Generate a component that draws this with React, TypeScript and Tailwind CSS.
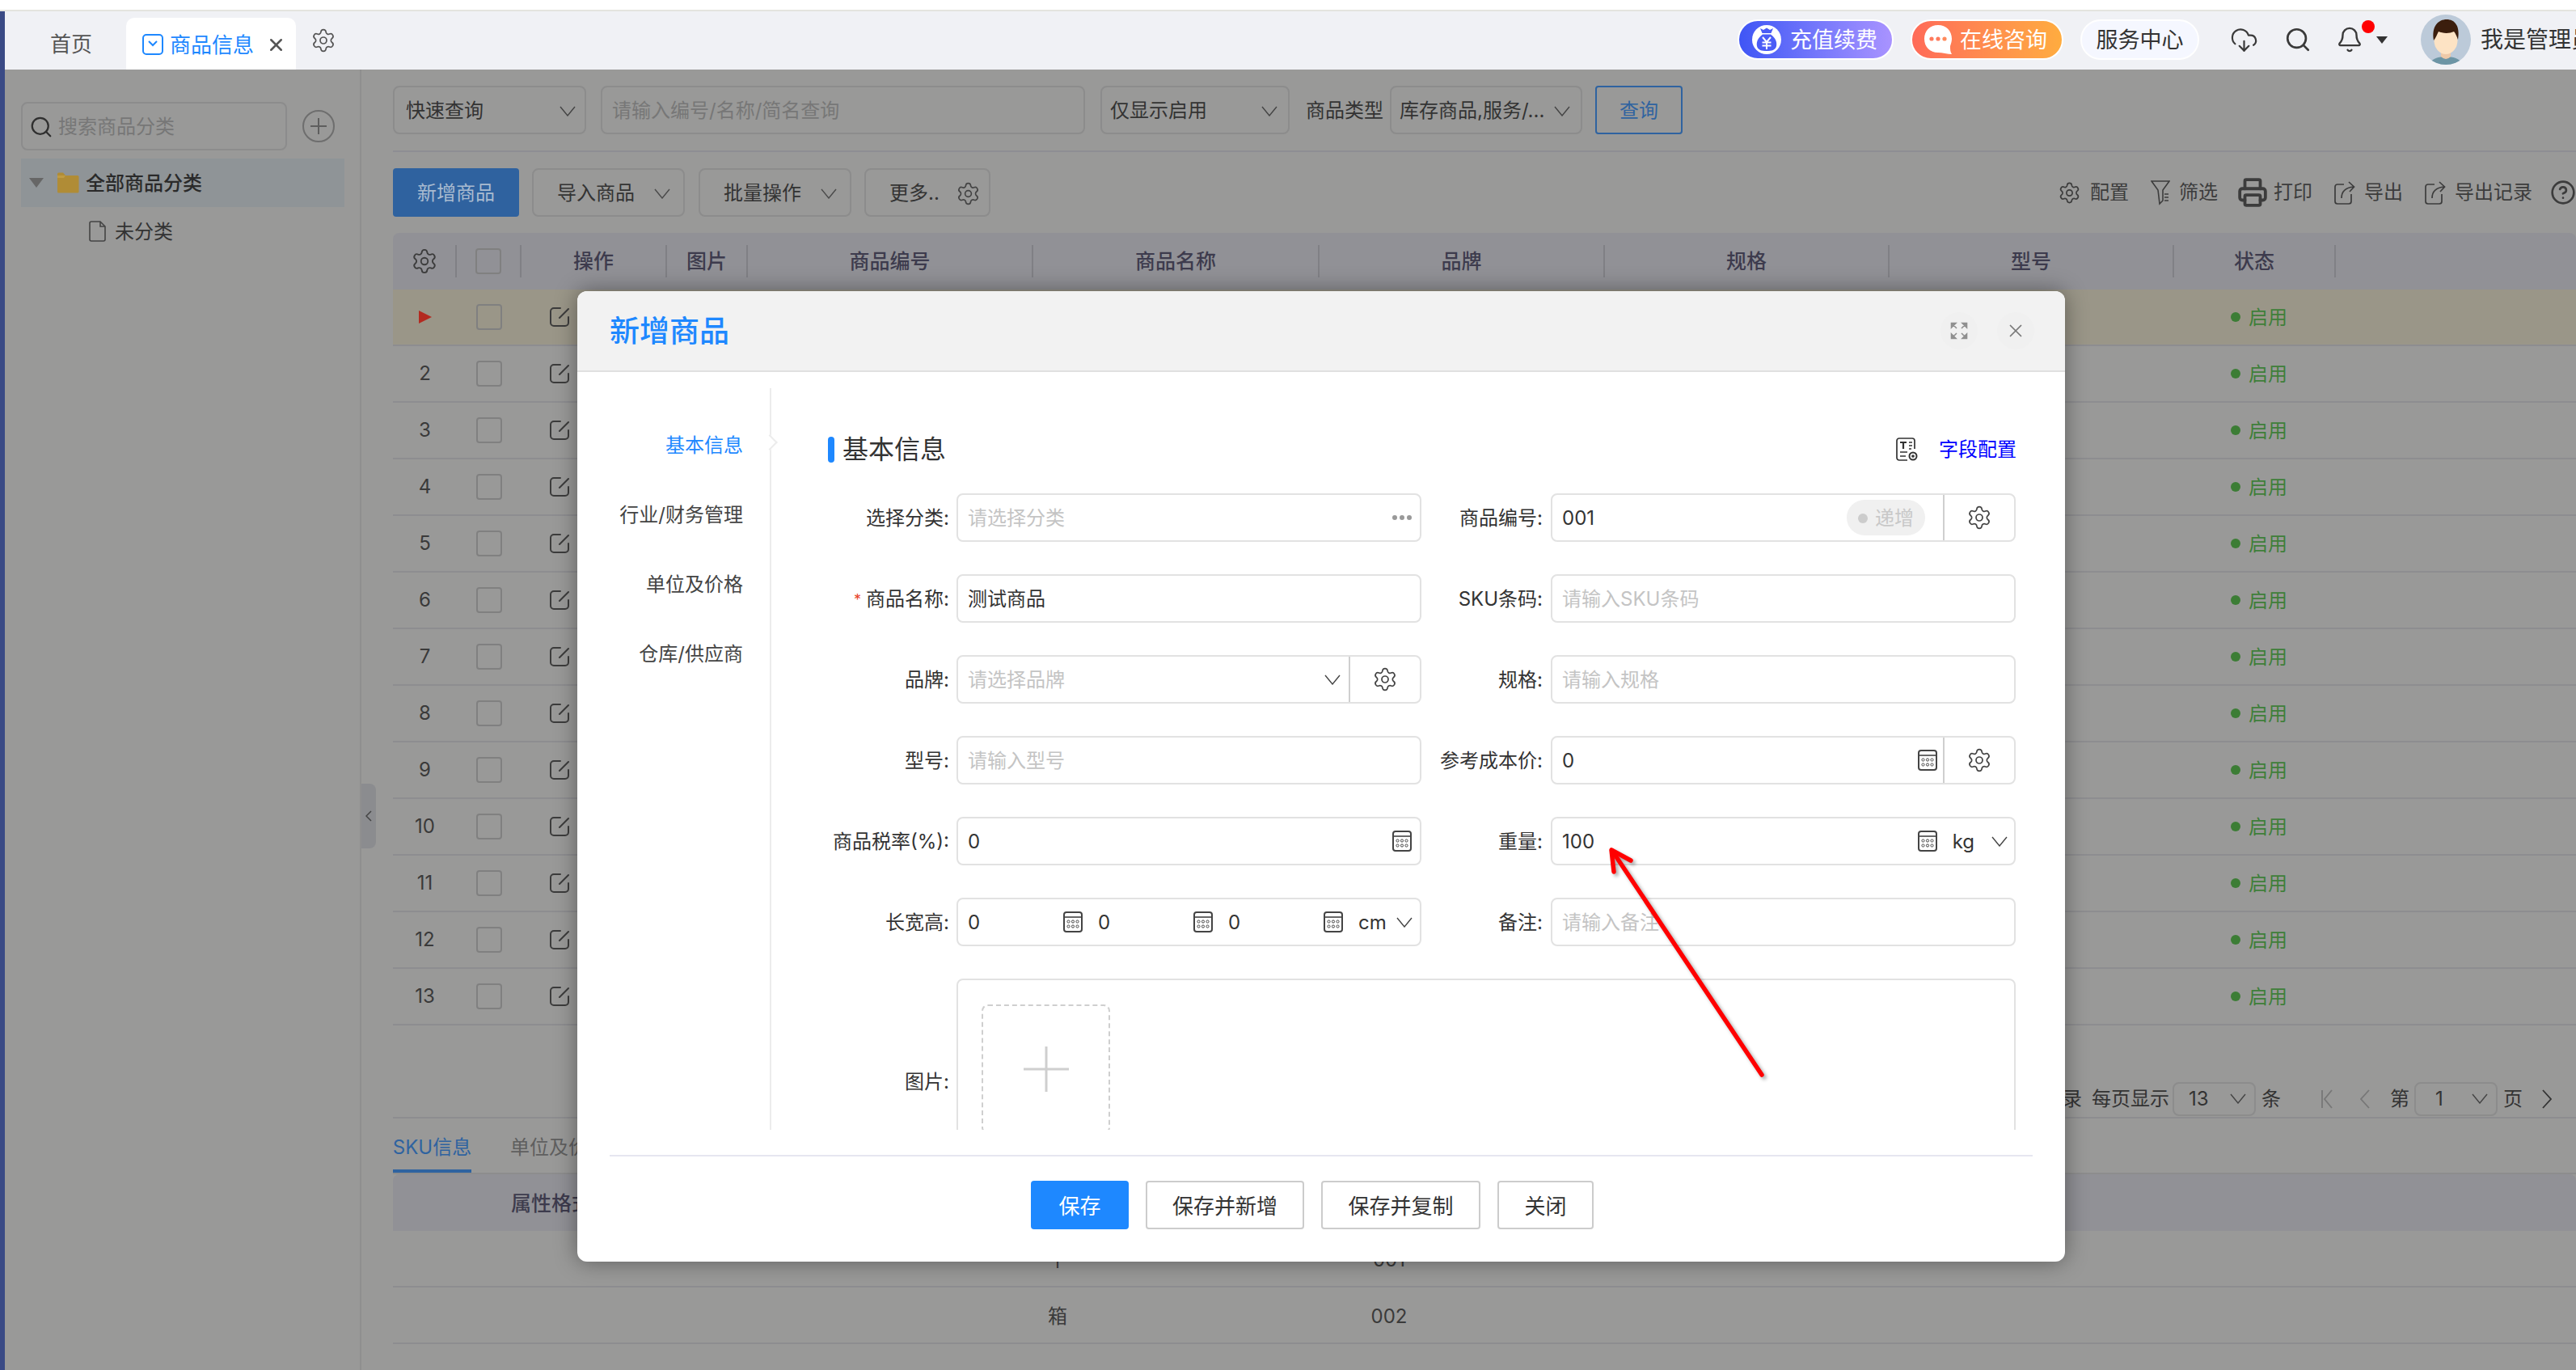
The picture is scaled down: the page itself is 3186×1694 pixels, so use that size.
import { Bell, CircleHelp, CloudDownload, Printer, Search, Settings, X } from "lucide-react";
import type { ReactNode } from "react";

const COLS = "grid grid-cols-[79px_80px_180px_100px_353px_354px_353px_352px_352px_200px_1fr]";

function Chev({ className = "text-[#444]", w = 20 }: { className?: string; w?: number }) {
  return (
    <svg width={w} height={13} viewBox="0 0 20 13" fill="none" stroke="currentColor" strokeWidth="1.4" className={`shrink-0 ${className}`}>
      <path d="M1 1 L10 12 L19 1" />
    </svg>
  );
}

function Calc() {
  return (
    <svg width="24" height="26" viewBox="0 0 24 26" fill="none" stroke="#444" className="shrink-0">
      <rect x="1" y="1" width="22" height="24" rx="3" strokeWidth="2" />
      <path d="M1 7h22" strokeWidth="1.6" />
      {[6.5, 12, 17.5].map((x) =>
        [12.5, 18.5].map((y) => <circle key={`${x}-${y}`} cx={x} cy={y} r="1.6" strokeWidth="1" />),
      )}
    </svg>
  );
}

function EditIcon() {
  return (
    <svg width="24" height="26" viewBox="0 0 24 26" fill="none" stroke="#3c3c3c" strokeWidth="2" strokeLinecap="round" className="shrink-0">
      <path d="M13 2 H5 a4 4 0 0 0 -4 4 V20 a4 4 0 0 0 4 4 H19 a4 4 0 0 0 4 -4 V13" />
      <path d="M12 14 L23 3" />
    </svg>
  );
}

function ExportIcon() {
  return (
    <svg width="26" height="30" viewBox="0 0 26 30" fill="none" stroke="#3c3c3c" strokeWidth="1.7" className="shrink-0">
      <path d="M12 5 H4 a3 3 0 0 0 -3 3 V26 a3 3 0 0 0 3 3 H18 a3 3 0 0 0 3 -3 V17" />
      <path d="M9 22 C9 14 13 9 24 8 M18 2 L24.5 8 L19 14" />
    </svg>
  );
}

function FilterIcon() {
  return (
    <svg width="24" height="32" viewBox="0 0 24 32" fill="none" stroke="#3c3c3c" strokeWidth="1.6" className="shrink-0">
      <path d="M1 2 H23 L15 13 V26 L11 30 Q10 21 9 13 Z" />
      <path d="M17 18 h5 M17 22 h5 M17 26 h5" />
    </svg>
  );
}

function FullIcon() {
  return (
    <svg width="22" height="22" viewBox="0 0 22 22" fill="#8f8f8f" stroke="#8f8f8f" strokeWidth="1.6">
      <path d="M1.5 1.5 L7 1.5 L1.5 7 Z M2 2 L8 8" />
      <path d="M20.5 1.5 L15 1.5 L20.5 7 Z M20 2 L14 8" />
      <path d="M1.5 20.5 L7 20.5 L1.5 15 Z M2 20 L8 14" />
      <path d="M20.5 20.5 L15 20.5 L20.5 15 Z M20 20 L14 14" />
    </svg>
  );
}

function FieldTplIcon() {
  return (
    <svg width="27" height="30" viewBox="0 0 27 30" fill="none" stroke="#333" strokeWidth="1.7">
      <path d="M14 28 H4 a3 3 0 0 1 -3 -3 V4 a3 3 0 0 1 3 -3 H20 a3 3 0 0 1 3 3 V14" />
      <path d="M5 6 h8 M9 6 v8" strokeWidth="2.2" />
      <path d="M16 6 h4 M16 10 h4 M16 14 h3 M5 18 h9 M5 23 h7" />
      <circle cx="21" cy="23" r="4.5" strokeWidth="2" />
      <circle cx="21" cy="23" r="1" fill="#333" />
    </svg>
  );
}

function MoneyBag() {
  return (
    <svg width="36" height="36" viewBox="0 0 36 36" className="shrink-0">
      <circle cx="18" cy="18" r="18" fill="#fff" />
      <path d="M10 4 L14 6 L18 3.5 L22 6 L26 4 L23.5 10 H12.5 Z" fill="#4a5cf6" />
      <path d="M13 11.5 H23 C29 16 31 21 30 26 C29 31 24 32 18 32 C12 32 7 31 6 26 C5 21 7 16 13 11.5 Z" fill="#4a5cf6" />
      <path d="M13 15 L18 21 L23 15 M12.5 21.5 H23.5 M12.5 25.5 H23.5 M18 21 V30" fill="none" stroke="#fff" strokeWidth="2" />
    </svg>
  );
}

function ChatBubble() {
  return (
    <svg width="36" height="38" viewBox="0 0 36 38" className="shrink-0">
      <path d="M18 1 C8 1 1 8 1 18 C1 28 8 35 18 35 C23 35 30 37 35 37 C33 34 33 31 33 27 C34 24 35 21 35 18 C35 8 28 1 18 1 Z" fill="#fff" />
      <circle cx="10" cy="18" r="2.6" fill="#ff7a5c" />
      <circle cx="18" cy="18" r="2.6" fill="#ff7a5c" />
      <circle cx="26" cy="18" r="2.6" fill="#ff8a5c" />
    </svg>
  );
}

function Avatar() {
  return (
    <svg width="62" height="62" viewBox="0 0 62 62" className="shrink-0">
      <defs>
        <clipPath id="avatar-clip">
          <circle cx="31" cy="31" r="31" />
        </clipPath>
      </defs>
      <g clipPath="url(#avatar-clip)">
        <rect width="62" height="62" fill="#bccad9" />
        <path d="M10 62 C14 54 22 52 31 52 C40 52 48 54 52 62 Z" fill="#6d95a5" />
        <path d="M25 44 H37 V52 Q31 58 25 52 Z" fill="#eec9a8" />
        <ellipse cx="31" cy="32" rx="14.5" ry="17" fill="#fde3c4" />
        <path d="M16 32 C13 14 22 6 32 6 C42 6 49 14 46 31 C44 26 43 23 41 21 C35 24 26 23 22 21 C20 25 19 28 16 32 Z" fill="#3b1e0d" />
      </g>
    </svg>
  );
}

function Pill({ className, children, w }: { className: string; children: ReactNode; w: string }) {
  return <div className={`flex h-[50px] shrink-0 items-center rounded-full border-2 border-white text-[27px] ${w} ${className}`}>{children}</div>;
}

function Box({ className = "", children }: { className?: string; children?: ReactNode }) {
  return <div className={`flex h-[60px] shrink-0 items-center rounded-lg border-2 border-[#8c8c8c] pt-[2px] text-[24px] text-[#333] ${className}`}>{children}</div>;
}

function ToolBtn({ w, label }: { w: string; label: string }) {
  return (
    <Box className={`justify-between rounded-[4px] pl-[29px] pr-[16px] ${w}`}>
      <span>{label}</span>
      <Chev className="text-[#4a4a4a]" />
    </Box>
  );
}

function Tool({ icon, label, className = "" }: { icon: ReactNode; label: string; className?: string }) {
  return (
    <div className={`flex shrink-0 items-center gap-[11px] whitespace-nowrap ${className}`}>
      {icon}
      <span>{label}</span>
    </div>
  );
}

function Field({ label, required, children, w, gap }: { label: string; required?: boolean; children: ReactNode; w: string; gap: string }) {
  return (
    <div className="flex h-[60px] items-center">
      <div className={`flex shrink-0 items-center justify-end pt-[2px] text-[24px] text-[#333] ${w} ${gap}`}>
        {required && <span className="mr-[6px] text-[18px] text-[#e8452c]">*</span>}
        {label}:
      </div>
      {children}
    </div>
  );
}

function Input({ className = "", children }: { className?: string; children?: ReactNode }) {
  return <div className={`flex h-[60px] w-[575px] shrink-0 items-center rounded-lg border-2 border-[#e2e2e2] pl-[12px] text-[24px] text-[#333] ${className}`}>{children}</div>;
}

const Hint = ({ text }: { text: string }) => <span className="pt-[2px] text-[#c4c4c4]">{text}</span>;
const Val = ({ children, className = "" }: { children: ReactNode; className?: string }) => <span className={`pt-[2px] ${className}`}>{children}</span>;

function GearAddon() {
  return (
    <div className="flex h-full w-[88px] shrink-0 items-center justify-center border-l-2 border-[#cfcfcf]">
      <Settings size={32} strokeWidth={1.3} color="#444" />
    </div>
  );
}

function SmallSelect({ value, pad }: { value: string; pad: string }) {
  return (
    <div className={`flex h-[42px] w-[103px] shrink-0 items-center justify-between rounded-lg border-2 border-[#8c8c8c] pr-[10px] ${pad}`}>
      <span>{value}</span>
      <Chev className="text-[#444]" />
    </div>
  );
}

export default function App() {
  const left = "w-[174px]";
  const right = "w-[150px]";
  const rows = Array.from({ length: 13 }, (_, i) => i + 1);

  return (
    <div className="relative flex h-[1694px] w-[3186px] flex-col overflow-hidden bg-white [font-family:'Inter','Noto_Sans_CJK_SC',sans-serif]">
      <div className="h-[14px] shrink-0 border-b-2 border-[#e4e4df] bg-white" />
      <div className="flex min-h-0 flex-1">
        <div className="w-[6px] shrink-0 bg-[#3a4a85]" />
        <div className="flex min-w-0 flex-1 flex-col">
          {/* top bar */}
          <div className="flex h-[72px] shrink-0 items-end bg-[#f0f1f5]">
            <div className="flex h-[64px] w-[150px] shrink-0 items-center pl-[56px] pt-[1px] text-[26px] text-[#555]">首页</div>
            <div className="flex h-[64px] w-[210px] shrink-0 items-center rounded-t-[10px] bg-white pl-[20px] pt-[2px] text-[26px] text-[#1e88ff]">
              <svg width="26" height="26" viewBox="0 0 26 26" fill="none" stroke="#1e88ff" strokeWidth="2" className="mr-[8px] shrink-0">
                <rect x="1" y="1" width="24" height="24" rx="4" />
                <path d="M8 9 L13 14 L18 9" />
              </svg>
              商品信息
              <X size={25} strokeWidth={2.4} color="#555" className="ml-[15px]" />
            </div>
            <div className="ml-[18px] flex h-[72px] items-center">
              <Settings size={32} strokeWidth={1.3} color="#555" />
            </div>
            <div className="flex-1" />
            <div className="flex h-[72px] w-[1037px] shrink-0 items-center overflow-hidden pb-[2px]">
              <Pill w="w-[193px]" className="bg-gradient-to-r from-[#3f55f5] to-[#a993ff] pl-[16px] text-white">
                <MoneyBag />
                <span className="ml-[11px] pt-[2px]">充值续费</span>
              </Pill>
              <Pill w="w-[189px]" className="ml-[21px] bg-gradient-to-r from-[#ff6a58] to-[#ffac3f] pl-[14px] text-white">
                <ChatBubble />
                <span className="ml-[9px] pt-[2px]">在线咨询</span>
              </Pill>
              <Pill w="w-[147px]" className="ml-[21px] justify-center bg-[#f5f7ff] pt-[2px] text-[#333]">
                服务中心
              </Pill>
              <CloudDownload size={35} strokeWidth={1.5} color="#3a3a3a" className="ml-[38px] shrink-0" />
              <Search size={34} strokeWidth={1.9} color="#3a3a3a" className="ml-[32px] shrink-0" />
              <div className="relative ml-[30px] shrink-0">
                <Bell size={34} strokeWidth={1.7} color="#3a3a3a" />
                <span className="absolute left-[32px] top-[-7px] h-[16px] w-[16px] rounded-full bg-[#ff0000]" />
              </div>
              <span className="ml-[16px] mt-[1px] h-0 w-0 shrink-0 border-x-[7px] border-t-[9px] border-x-transparent border-t-[#333]" />
              <div className="ml-[41px] shrink-0">
                <Avatar />
              </div>
              <span className="ml-[12px] shrink-0 whitespace-nowrap text-[28px] text-[#333]">我是管理员</span>
            </div>
          </div>

          <div className="flex min-h-0 flex-1 bg-[#999998]">
            {/* category tree */}
            <div className="relative w-[441px] shrink-0 border-r-2 border-[#8f8f8f] px-[20px] pt-[40px]">
              <div className="flex items-center">
                <Box className="w-[329px] pl-[8px]">
                  <Search size={30} strokeWidth={1.8} color="#2f2f2f" />
                  <span className="ml-[6px] text-[#777]">搜索商品分类</span>
                </Box>
                <div className="ml-[19px] flex h-[40px] w-[40px] items-center justify-center rounded-full border-2 border-[#6e6e6e] text-[#5e5e5e]">
                  <svg width="22" height="22" viewBox="0 0 22 22" stroke="currentColor" strokeWidth="2">
                    <path d="M11 1v20M1 11h20" />
                  </svg>
                </div>
              </div>
              <div className="mt-[10px] flex h-[60px] w-[400px] items-center bg-[#8f9497] pl-[10px] text-[24px] font-medium text-[#2a2a2a]">
                <span className="h-0 w-0 border-x-[9px] border-t-[12px] border-x-transparent border-t-[#666]" />
                <svg width="28" height="26" viewBox="0 0 28 26" className="ml-[16px] mr-[8px]">
                  <path d="M1 2 a1.5 1.5 0 0 1 1.5 -1.5 H8 L11 4 H26 a1.5 1.5 0 0 1 1.5 1.5 V24 a1.5 1.5 0 0 1 -1.5 1.5 H2.5 A1.5 1.5 0 0 1 1 24 Z" fill="#b08c36" />
                  <path d="M1 4 H11 L9 7 H1 Z" fill="#c09b42" />
                </svg>
                <span className="pt-[2px]">全部商品分类</span>
              </div>
              <div className="flex h-[60px] items-center pl-[84px] text-[24px] text-[#333]">
                <svg width="21" height="26" viewBox="0 0 21 26" fill="none" stroke="#444" strokeWidth="1.6" className="mr-[11px]">
                  <path d="M3 1 H14 L20 7 V23 a2 2 0 0 1 -2 2 H3 a2 2 0 0 1 -2 -2 V3 a2 2 0 0 1 2 -2 Z M14 1 V7 H20" />
                </svg>
                <span className="pt-[2px]">未分类</span>
              </div>
              <div className="absolute right-[-20px] top-[883px] flex h-[80px] w-[18px] items-center justify-center rounded-r-lg bg-[#8b8c8f] text-[#444]">
                <svg width="8" height="14" viewBox="0 0 8 14" fill="none" stroke="currentColor" strokeWidth="1.5">
                  <path d="M7 1 L1 7 L7 13" />
                </svg>
              </div>
            </div>

            {/* goods list */}
            <div className="min-w-0 flex-1 pl-[39px] text-[24px] text-[#333]">
              <div className="flex pt-[20px]">
                <Box className="w-[239px] justify-between pl-[14px] pr-[11px]">
                  <span>快速查询</span>
                  <Chev />
                </Box>
                <Box className="ml-[18px] w-[599px] pl-[12px] text-[#777]">请输入编号/名称/简名查询</Box>
                <Box className="ml-[19px] w-[234px] justify-between pl-[10px] pr-[13px]">
                  <span>仅显示启用</span>
                  <Chev />
                </Box>
                <div className="ml-[20px] flex h-[60px] w-[96px] shrink-0 items-center pt-[2px]">商品类型</div>
                <Box className="ml-[8px] w-[238px] justify-between pl-[10px] pr-[13px]">
                  <span className="whitespace-nowrap">库存商品,服务/...</span>
                  <Chev />
                </Box>
                <div className="ml-[16px] flex h-[60px] w-[108px] shrink-0 items-center justify-center rounded-[4px] border-2 border-[#2f63a0] pt-[2px] text-[#2f63a0]">查询</div>
              </div>
              <div className="mt-[20px] border-t-2 border-[#8e8e93]" />

              <div className="mt-[20px] flex h-[60px] items-center">
                <div className="flex h-[60px] w-[156px] shrink-0 items-center justify-center rounded-[4px] bg-[#2f629f] pt-[2px] text-[#a9bbd0]">新增商品</div>
                <ToolBtn w="ml-[16px] w-[189px]" label="导入商品" />
                <ToolBtn w="ml-[17px] w-[189px]" label="批量操作" />
                <Box className="ml-[16px] w-[156px] justify-between rounded-[4px] pl-[29px] pr-[10px]">
                  <span>更多..</span>
                  <Settings size={31} strokeWidth={1.3} color="#444" />
                </Box>
                <div className="ml-auto flex w-[641px] shrink-0 items-center text-[24px] text-[#3c3c3c]">
                  <Tool icon={<Settings size={29} strokeWidth={1.4} color="#3c3c3c" />} label="配置" />
                  <Tool icon={<FilterIcon />} label="筛选" className="ml-[27px]" />
                  <Tool icon={<Printer size={38} strokeWidth={2.4} color="#3c3c3c" />} label="打印" className="ml-[24px] !gap-[7px]" />
                  <Tool icon={<ExportIcon />} label="导出" className="ml-[27px]" />
                  <Tool icon={<ExportIcon />} label="导出记录" className="ml-[27px]" />
                  <CircleHelp size={32} strokeWidth={2} color="#3c3c3c" className="ml-[22px] shrink-0" />
                </div>
              </div>

              <div className={`${COLS} mt-[20px] h-[70px] items-center rounded-t-lg bg-[#919196] text-[25px] font-medium text-[#3d3b4d]`}>
                <div className="flex h-[40px] items-center justify-center border-r-2 border-[#808085]">
                  <Settings size={34} strokeWidth={1.3} color="#3c3c3c" />
                </div>
                <div className="flex h-[40px] items-center justify-center border-r-2 border-[#808085]">
                  <span className="h-[32px] w-[32px] rounded-[4px] border-2 border-[#808080]" />
                </div>
                {["操作", "图片", "商品编号", "商品名称", "品牌", "规格", "型号", "状态"].map((h) => (
                  <div key={h} className="flex h-[40px] items-center justify-center border-r-2 border-[#808085] pt-[2px]">
                    {h}
                  </div>
                ))}
              </div>

              {rows.map((n) => (
                <div key={n} className={`${COLS} h-[70px] items-center border-b-2 border-[#8d8d90] ${n === 1 ? "bg-[#9a9688]" : ""}`}>
                  <div className="flex justify-center text-[#3a3a3a]">
                    {n === 1 ? <span className="h-0 w-0 border-y-[8px] border-l-[16px] border-y-transparent border-l-[#b32a20]" /> : n}
                  </div>
                  <div className="flex justify-center">
                    <span className="h-[32px] w-[32px] rounded-[4px] border-2 border-[#808080]" />
                  </div>
                  <div className="pl-[35px]">
                    <EditIcon />
                  </div>
                  <div />
                  <div />
                  <div />
                  <div />
                  <div />
                  <div />
                  <div className="flex items-center pl-[70px] text-[#3f7f3a]">
                    <span className="mr-[10px] h-[12px] w-[12px] rounded-full bg-[#3c7d35]" />
                    <span className="pt-[2px]">启用</span>
                  </div>
                  <div />
                </div>
              ))}

              <div className="flex h-[115px] items-center justify-end border-b-2 border-[#8d8d90] pr-[30px] pt-[68px]">
                <span className="whitespace-nowrap">共13条记录</span>
                <span className="ml-[12px] whitespace-nowrap">每页显示</span>
                <div className="ml-[4px]">
                  <SmallSelect value="13" pad="pl-[18px]" />
                </div>
                <span className="ml-[7px]">条</span>
                <svg width="14" height="24" viewBox="0 0 14 24" fill="none" stroke="#777" strokeWidth="1.8" className="ml-[50px]">
                  <path d="M1 1 V23 M13 1 L4 12 L13 23" />
                </svg>
                <svg width="12" height="24" viewBox="0 0 12 24" fill="none" stroke="#777" strokeWidth="1.8" className="ml-[34px]">
                  <path d="M11 1 L1 12 L11 23" />
                </svg>
                <span className="ml-[25px]">第</span>
                <div className="ml-[6px]">
                  <SmallSelect value="1" pad="pl-[24px]" />
                </div>
                <span className="ml-[7px]">页</span>
                <svg width="12" height="24" viewBox="0 0 12 24" fill="none" stroke="#333" strokeWidth="1.8" className="ml-[24px]">
                  <path d="M1 1 L11 12 L1 23" />
                </svg>
              </div>

              <div className="flex h-[69px] items-end border-b-2 border-[#8d8d8d]">
                <div className="flex h-[69px] w-[97px] items-center justify-center whitespace-nowrap border-b-4 border-[#2f63a0] pt-[11px] text-[#2f63a0]">SKU信息</div>
                <div className="ml-[48px] flex h-[69px] items-center whitespace-nowrap pt-[6px] text-[#5f5f5f]">单位及价格</div>
              </div>
              <div className="flex h-[70px] items-center rounded-t-lg bg-[#919196] pl-[146px] pt-[3px] text-[25px] font-medium text-[#3d3b4d]">属性格式</div>
              {[
                ["个", "001"],
                ["箱", "002"],
              ].map(([unit, code]) => (
                <div key={code} className="grid h-[70px] grid-cols-[622px_400px_420px_1fr] items-center border-b-2 border-[#8d8d90] pt-[4px] text-[#3a3a3a]">
                  <div />
                  <div className="text-center">{unit}</div>
                  <div className="text-center">{code}</div>
                  <div />
                </div>
              ))}
            </div>
          </div>
        </div>
      </div>

      {/* add goods dialog */}
      <div className="absolute left-[714px] top-[360px] flex h-[1200px] w-[1840px] flex-col overflow-hidden rounded-xl bg-white shadow-[0_0_28px_rgba(0,0,0,0.4)]">
        <div className="flex h-[100px] shrink-0 items-center justify-between border-b-2 border-[#e0e0e0] bg-[#f2f2f2] pl-[40px] pr-[38px]">
          <span className="pt-[2px] text-[37px] font-medium text-[#1e88ff]">新增商品</span>
          <div className="flex items-center gap-[24px]">
            <div className="flex h-[46px] w-[46px] items-center justify-center rounded-full bg-[#f0f0f0]">
              <FullIcon />
            </div>
            <div className="flex h-[46px] w-[46px] items-center justify-center rounded-full bg-[#f0f0f0]">
              <X size={26} strokeWidth={1.6} color="#777" />
            </div>
          </div>
        </div>

        <div className="flex h-[937px] shrink-0 pt-[20px]">
          <div className="relative h-full w-[240px] shrink-0 border-r-2 border-[#ececec] pr-[33px] pt-[28px] text-[24px] text-[#444]">
            {["基本信息", "行业/财务管理", "单位及价格", "仓库/供应商"].map((t, i) => (
              <div key={t} className={`flex h-[86px] items-center justify-end whitespace-nowrap ${i === 0 ? "text-[#1e88ff]" : ""}`}>
                {t}
              </div>
            ))}
            <span className="absolute right-[-7px] top-[60px] h-[14px] w-[14px] rotate-45 border-r-2 border-t-2 border-[#ececec] bg-white" />
          </div>

          <div className="h-full min-w-0 flex-1 overflow-hidden pl-[46px]">
            <div className="ml-[24px] mt-[56px] flex h-[40px] w-[1470px] items-center">
              <span className="h-[32px] w-[8px] rounded-full bg-[#1e88ff]" />
              <span className="ml-[10px] text-[32px] text-[#333]">基本信息</span>
              <div className="ml-auto flex items-center text-[24px] text-[#0000ff]">
                <FieldTplIcon />
                <span className="ml-[26px]">字段配置</span>
              </div>
            </div>

            <div className="mt-[34px] grid w-[1493px] grid-cols-[758px_735px] gap-y-[40px]">
              <Field label="选择分类" w={left} gap="mr-[9px]">
                <Input className="justify-between pr-[10px]">
                  <Hint text="请选择分类" />
                  <span className="flex gap-[3px]">
                    <i className="h-[6px] w-[6px] rounded-full bg-[#999]" />
                    <i className="h-[6px] w-[6px] rounded-full bg-[#999]" />
                    <i className="h-[6px] w-[6px] rounded-full bg-[#999]" />
                  </span>
                </Input>
              </Field>
              <Field label="商品编号" w={right} gap="mr-[10px]">
                <Input>
                  <Val>001</Val>
                  <span className="ml-auto mr-[22px] flex h-[44px] w-[97px] items-center justify-center rounded-full bg-[#f0f0f0] pt-[2px] text-[#c8c8c8]">
                    <i className="mr-[9px] h-[12px] w-[12px] rounded-full bg-[#ccc]" />
                    递增
                  </span>
                  <GearAddon />
                </Input>
              </Field>

              <Field label="商品名称" required w={left} gap="mr-[9px]">
                <Input>
                  <Val>测试商品</Val>
                </Input>
              </Field>
              <Field label="SKU条码" w={right} gap="mr-[10px]">
                <Input>
                  <Hint text="请输入SKU条码" />
                </Input>
              </Field>

              <Field label="品牌" w={left} gap="mr-[9px]">
                <Input>
                  <Hint text="请选择品牌" />
                  <span className="ml-auto mr-[10px]">
                    <Chev />
                  </span>
                  <GearAddon />
                </Input>
              </Field>
              <Field label="规格" w={right} gap="mr-[10px]">
                <Input>
                  <Hint text="请输入规格" />
                </Input>
              </Field>

              <Field label="型号" w={left} gap="mr-[9px]">
                <Input>
                  <Hint text="请输入型号" />
                </Input>
              </Field>
              <Field label="参考成本价" w={right} gap="mr-[10px]">
                <Input>
                  <Val>0</Val>
                  <span className="ml-auto mr-[7px]">
                    <Calc />
                  </span>
                  <GearAddon />
                </Input>
              </Field>

              <Field label="商品税率(%)" w={left} gap="mr-[9px]">
                <Input className="justify-between pr-[10px]">
                  <Val>0</Val>
                  <Calc />
                </Input>
              </Field>
              <Field label="重量" w={right} gap="mr-[10px]">
                <Input className="pr-[8px]">
                  <Val>100</Val>
                  <span className="ml-auto">
                    <Calc />
                  </span>
                  <Val className="ml-[19px]">kg</Val>
                  <span className="ml-[21px]">
                    <Chev />
                  </span>
                </Input>
              </Field>

              <Field label="长宽高" w={left} gap="mr-[9px]">
                <Input className="pr-[9px]">
                  <Val className="w-[118px]">0</Val>
                  <Calc />
                  <Val className="ml-[19px] w-[118px]">0</Val>
                  <Calc />
                  <Val className="ml-[19px] w-[118px]">0</Val>
                  <Calc />
                  <Val className="ml-[19px]">cm</Val>
                  <span className="ml-auto">
                    <Chev />
                  </span>
                </Input>
              </Field>
              <Field label="备注" w={right} gap="mr-[10px]">
                <Input>
                  <Hint text="请输入备注" />
                </Input>
              </Field>

              <div className="col-span-2 flex items-center">
                <div className="mr-[9px] w-[174px] shrink-0 text-right text-[24px] text-[#333]">图片:</div>
                <div className="h-[256px] flex-1 overflow-visible rounded-lg border-2 border-[#e2e2e2] pl-[29px] pt-[30px]">
                  <div className="flex h-[160px] w-[159px] items-center justify-center rounded-lg border-2 border-dashed border-[#cfcfcf]">
                    <svg width="56" height="56" viewBox="0 0 56 56" stroke="#cfcfcf" strokeWidth="3">
                      <path d="M28 0v56M0 28h56" />
                    </svg>
                  </div>
                </div>
              </div>
            </div>
          </div>
        </div>

        <div className="mx-[40px] mt-[31px] flex border-t-2 border-[#e6e6f0] pl-[521px] pt-[30px] text-[26px] text-[#333]">
          <div className="flex h-[60px] w-[121px] items-center justify-center rounded-[4px] bg-[#1e88ff] pt-[2px] text-white">保存</div>
          <div className="ml-[21px] flex h-[60px] w-[196px] items-center justify-center rounded-[4px] border-2 border-[#ccc] pt-[2px]">保存并新增</div>
          <div className="ml-[21px] flex h-[60px] w-[197px] items-center justify-center rounded-[4px] border-2 border-[#ccc] pt-[2px]">保存并复制</div>
          <div className="ml-[21px] flex h-[60px] w-[119px] items-center justify-center rounded-[4px] border-2 border-[#ccc] pt-[2px]">关闭</div>
        </div>
      </div>

      {/* annotation arrow */}
      <svg width="210" height="300" viewBox="0 0 210 300" fill="none" stroke="#ff0000" strokeWidth="5.5" strokeLinecap="round" strokeLinejoin="round" className="absolute left-[1980px] top-[1040px] drop-shadow-[3px_3px_2px_rgba(0,0,0,0.35)]">
        <path d="M199 289 L14 12" />
        <path d="M37 24 L13 11 L16 38" />
      </svg>
    </div>
  );
}
